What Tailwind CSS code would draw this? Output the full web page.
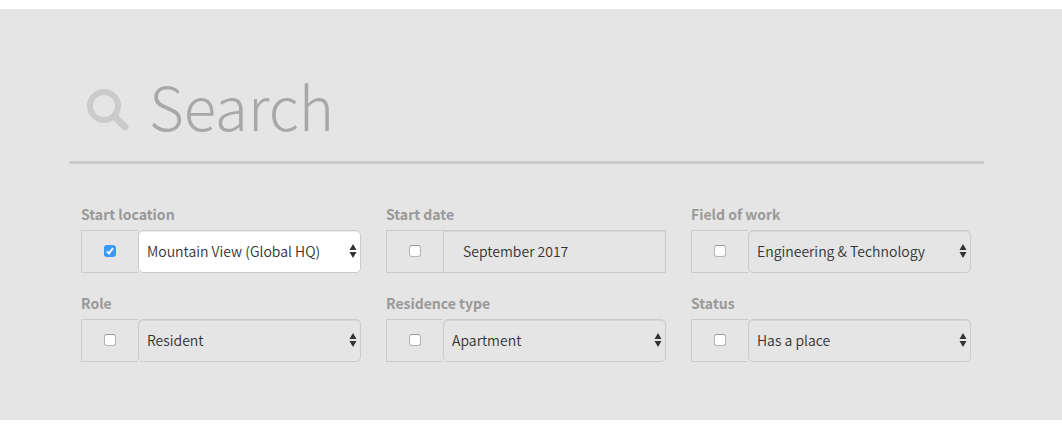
<!DOCTYPE html>
<html lang="en">
<head>
<meta charset="utf-8">
<meta name="viewport" content="width=device-width, initial-scale=1">
<title>Search</title>
<script src="https://cdn.jsdelivr.net/npm/@tailwindcss/browser@4"></script>
</head>
<body class="bg-white py-[9px] font-['Noto_Sans_CJK_SC','Noto_Sans_CJK_JP',sans-serif] text-[#333]">
<svg class="hidden">
  <symbol id="arrows" viewBox="0 0 8 14"><path d="M4 0 7.5 6H.5zM4 14 .5 8h7z" fill="#333"/></symbol>
</svg>
<main class="bg-[#e5e5e5] pr-[78px] pb-[58px] pl-[69px]">
  <form>
    <header class="flex items-center gap-[20px] border-b-3 border-[#cbcbcb] px-[18px] pt-[50px]">
      <svg class="size-[42px] shrink-0" viewBox="0 0 42 42" fill="none" stroke="#cbcbcb" aria-hidden="true">
        <circle cx="17" cy="17" r="14" stroke-width="6"/>
        <path d="m28 28 10 10" stroke-width="7" stroke-linecap="round"/>
      </svg>
      <input type="search" aria-label="Search" placeholder="Search" class="h-[102px] min-w-0 flex-1 bg-transparent pb-[12px] text-[60px] font-light outline-none placeholder:text-[#a8a8a8]">
    </header>
    <div class="grid grid-cols-3 gap-x-[25px] gap-y-[20px] pt-[40px] pr-[13px] pl-[12px]">
      <div>
        <label for="location" class="block h-[26px] text-[14px] leading-[20px] font-bold text-[#999]">Start location</label>
        <div class="flex h-[43px]">
          <span class="flex w-[57px] items-center justify-center border border-r-0 border-[#cbcbcb] pb-[1px]">
            <input type="checkbox" checked aria-label="Filter by start location" class="peer size-[12px] appearance-none rounded-[3px] bg-[#3b99fc]">
            <svg class="pointer-events-none absolute size-[12px]" viewBox="0 0 12 12" fill="none" stroke="#fff" stroke-width="2" aria-hidden="true"><path d="m3 6.3 2 2.2L9 3"/></svg>
          </span>
          <span class="relative min-w-0 flex-1">
            <select id="location" class="size-full appearance-none rounded-[5px] border border-[#cbcbcb] bg-white pr-[20px] pb-[1px] pl-[8px] text-[14px] font-[350] shadow-[inset_0_1px_1px_rgba(0,0,0,0.075)]"><option>Mountain View (Global HQ)</option></select>
            <svg class="pointer-events-none absolute top-[14px] right-[4px] h-[14px] w-[8px]" aria-hidden="true"><use href="#arrows"/></svg>
          </span>
        </div>
      </div>
      <div>
        <label for="date" class="block h-[26px] text-[14px] leading-[20px] font-bold text-[#999]">Start date</label>
        <div class="flex h-[43px]">
          <span class="flex w-[57px] items-center justify-center border border-r-0 border-[#cbcbcb] pb-[1px]">
            <input type="checkbox" aria-label="Filter by start date" class="size-[12px] appearance-none rounded-[3px] border border-[#b4b4b4] border-t-[#999] bg-white">
          </span>
          <input id="date" type="text" value="September 2017" class="min-w-0 flex-1 border border-[#cbcbcb] bg-transparent pb-[1px] pl-[19px] text-[14px] font-[350] shadow-[inset_0_1px_1px_rgba(0,0,0,0.075)]">
        </div>
      </div>
      <div>
        <label for="field" class="block h-[26px] text-[14px] leading-[20px] font-bold text-[#999]">Field of work</label>
        <div class="flex h-[43px]">
          <span class="flex w-[57px] items-center justify-center border border-r-0 border-[#cbcbcb] pb-[1px]">
            <input type="checkbox" aria-label="Filter by field of work" class="size-[12px] appearance-none rounded-[3px] border border-[#b4b4b4] border-t-[#999] bg-white">
          </span>
          <span class="relative min-w-0 flex-1">
            <select id="field" class="size-full appearance-none rounded-[5px] border border-[#cbcbcb] bg-transparent pr-[20px] pb-[1px] pl-[8px] text-[14px] font-[350] shadow-[inset_0_1px_1px_rgba(0,0,0,0.075)]"><option>Engineering &amp; Technology</option></select>
            <svg class="pointer-events-none absolute top-[14px] right-[4px] h-[14px] w-[8px]" aria-hidden="true"><use href="#arrows"/></svg>
          </span>
        </div>
      </div>
      <div>
        <label for="role" class="block h-[26px] text-[14px] leading-[20px] font-bold text-[#999]">Role</label>
        <div class="flex h-[43px]">
          <span class="flex w-[57px] items-center justify-center border border-r-0 border-[#cbcbcb] pb-[1px]">
            <input type="checkbox" aria-label="Filter by role" class="size-[12px] appearance-none rounded-[3px] border border-[#b4b4b4] border-t-[#999] bg-white">
          </span>
          <span class="relative min-w-0 flex-1">
            <select id="role" class="size-full appearance-none rounded-[5px] border border-[#cbcbcb] bg-transparent pr-[20px] pb-[1px] pl-[8px] text-[14px] font-[350] shadow-[inset_0_1px_1px_rgba(0,0,0,0.075)]"><option>Resident</option></select>
            <svg class="pointer-events-none absolute top-[14px] right-[4px] h-[14px] w-[8px]" aria-hidden="true"><use href="#arrows"/></svg>
          </span>
        </div>
      </div>
      <div>
        <label for="residence" class="block h-[26px] text-[14px] leading-[20px] font-bold text-[#999]">Residence type</label>
        <div class="flex h-[43px]">
          <span class="flex w-[57px] items-center justify-center border border-r-0 border-[#cbcbcb] pb-[1px]">
            <input type="checkbox" aria-label="Filter by residence type" class="size-[12px] appearance-none rounded-[3px] border border-[#b4b4b4] border-t-[#999] bg-white">
          </span>
          <span class="relative min-w-0 flex-1">
            <select id="residence" class="size-full appearance-none rounded-[5px] border border-[#cbcbcb] bg-transparent pr-[20px] pb-[1px] pl-[8px] text-[14px] font-[350] shadow-[inset_0_1px_1px_rgba(0,0,0,0.075)]"><option>Apartment</option></select>
            <svg class="pointer-events-none absolute top-[14px] right-[4px] h-[14px] w-[8px]" aria-hidden="true"><use href="#arrows"/></svg>
          </span>
        </div>
      </div>
      <div>
        <label for="status" class="block h-[26px] text-[14px] leading-[20px] font-bold text-[#999]">Status</label>
        <div class="flex h-[43px]">
          <span class="flex w-[57px] items-center justify-center border border-r-0 border-[#cbcbcb] pb-[1px]">
            <input type="checkbox" aria-label="Filter by status" class="size-[12px] appearance-none rounded-[3px] border border-[#b4b4b4] border-t-[#999] bg-white">
          </span>
          <span class="relative min-w-0 flex-1">
            <select id="status" class="size-full appearance-none rounded-[5px] border border-[#cbcbcb] bg-transparent pr-[20px] pb-[1px] pl-[8px] text-[14px] font-[350] shadow-[inset_0_1px_1px_rgba(0,0,0,0.075)]"><option>Has a place</option></select>
            <svg class="pointer-events-none absolute top-[14px] right-[4px] h-[14px] w-[8px]" aria-hidden="true"><use href="#arrows"/></svg>
          </span>
        </div>
      </div>
    </div>
  </form>
</main>
</body>
</html>
